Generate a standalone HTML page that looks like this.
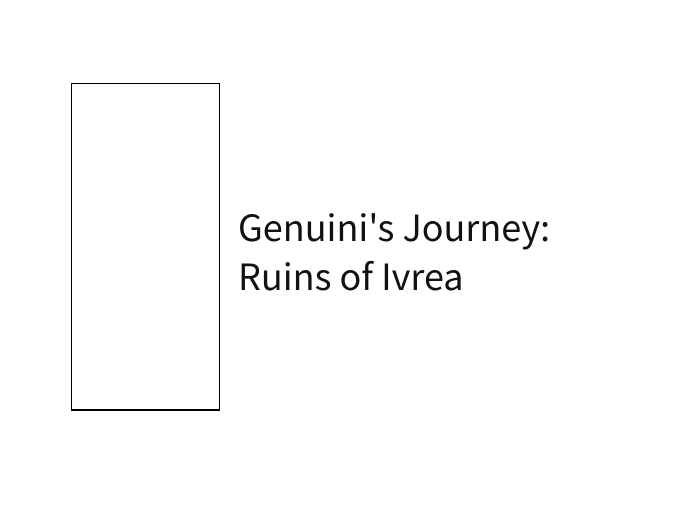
<!DOCTYPE html>
<html><head><style>
html,body{margin:0;padding:0;background:#fff;width:700px;height:507px;overflow:hidden}
.box{position:absolute;left:71px;top:83px;width:147px;height:325px;border:1px solid #000;border-bottom:2px solid #000}
.t{position:absolute;left:238px;top:202px;font-family:"Noto Sans CJK JP",sans-serif;font-size:36px;line-height:49px;color:#111;white-space:nowrap}
</style></head><body>
<div class="box"></div>
<div class="t">Genuini's Journey:<br>Ruins of Ivrea</div>
</body></html>
